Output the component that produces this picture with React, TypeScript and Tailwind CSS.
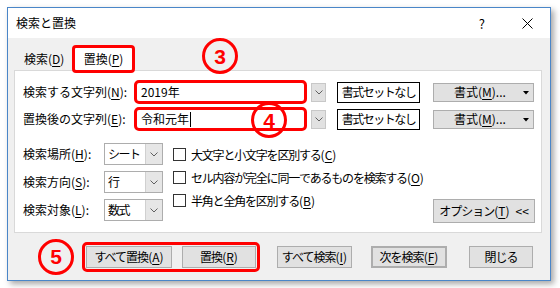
import React from 'react';

const font = { fontFamily: '"Noto Sans CJK JP", "Noto Sans", sans-serif' };

function U({ c }: { c: string }) {
  return <span className="underline underline-offset-[2px] decoration-1">{c}</span>;
}

function Chevron() {
  return (
    <svg width="8" height="5" viewBox="0 0 8 5" fill="none">
      <path d="M0.5 0.5 L4 4 L7.5 0.5" stroke="#606060" strokeWidth="1" />
    </svg>
  );
}

function Circle({ n, className }: { n: string; className: string }) {
  return (
    <div
      className={`w-[36px] h-[36px] rounded-full border-[3px] border-[#ff0000] bg-transparent flex items-center justify-center ${className}`}
    >
      <span className="text-[#ff0000] text-[21px] font-bold leading-none" style={{ fontFamily: '"Liberation Sans", Arial, sans-serif' }}>
        {n}
      </span>
    </div>
  );
}

function TextRow({ label, k, value, cursor }: { label: string; k: string; value: string; cursor?: boolean }) {
  return (
    <div className="flex items-center h-[24px]">
      <div className="w-[111px]">
        {label}(<U c={k} />):
      </div>
      <div className="w-[173px] h-[24px] border-[3px] border-[#ff0000] rounded-[5px] bg-white pl-[4px] flex items-center">
        <span>{value}</span>
        {cursor && <span className="inline-block w-px h-[15px] bg-black ml-px" />}
      </div>
      <div className="ml-[4px] w-[15px] h-[19px] bg-[#e1e1e1] border border-[#c8c8c8] flex items-center justify-center">
        <Chevron />
      </div>
      <div className="ml-[11px] w-[83px] h-[21px] border border-black bg-white flex items-center justify-center tracking-[-1.5px]">
        書式セットなし
      </div>
      <div className="ml-[13px] w-[101px] h-[19px] bg-[#e1e1e1] border border-[#adadad] flex items-center relative">
        <span className="ml-[20px]">
          書式(<U c="M" />)...
        </span>
        <svg className="absolute right-[4px] top-[7px]" width="6" height="4" viewBox="0 0 6 4">
          <path d="M0 0 L6 0 L3 3.5 Z" fill="#000" />
        </svg>
      </div>
    </div>
  );
}

function SelectRow({ label, k, value }: { label: string; k: string; value: string }) {
  return (
    <div className="flex items-center h-[22px]">
      <div className="w-[81px]">
        {label}(<U c={k} />):
      </div>
      <div className="w-[59px] h-[22px] border border-[#adadad] bg-white flex">
        <div className="flex-1 pl-[3px] flex items-center tracking-[-1.5px] whitespace-nowrap">{value}</div>
        <div className="w-[17px] bg-[#e6e6e6] border-l border-[#d0d0d0] flex items-center justify-center">
          <Chevron />
        </div>
      </div>
    </div>
  );
}

function Check({ label, k }: { label: string; k: string }) {
  return (
    <div className="flex items-center h-[23px] whitespace-nowrap">
      <div className="w-[13px] h-[13px] border border-[#333] bg-white" />
      <span className="ml-[5px]">
        <span className="tracking-[-1.2px]">{label}</span>(<U c={k} />)
      </span>
    </div>
  );
}

function Btn({ label, k, tail, className = '' }: { label: string; k?: string; tail?: string; className?: string }) {
  return (
    <div className={`h-[22px] bg-[#e1e1e1] border border-[#adadad] flex items-center justify-center whitespace-nowrap ${className}`}>
      <span className="tracking-[-1px]">{label}</span>
      {k && (
        <span>
          (<U c={k} />)
        </span>
      )}
      {tail && <span className="ml-[6px]">{tail}</span>}
    </div>
  );
}

export default function App() {
  return (
    <div className="w-[560px] h-[288px] bg-white relative overflow-hidden pt-[7px] pl-[7px] text-[12px] text-black leading-none" style={font}>
      <div className="w-[544px] h-[274px] border border-[#4a86c8] flex flex-col shadow-[3px_3px_6px_rgba(0,0,0,0.35)]">
        <div className="h-[30px] bg-white flex items-center pl-[8px] pr-[17px]">
          <span>検索と置換</span>
          <div className="ml-auto flex items-center gap-[37px]">
            <span className="text-[13px]">?</span>
            <svg width="11" height="11" viewBox="0 0 11 11">
              <path d="M0.5 0.5 L10.5 10.5 M10.5 0.5 L0.5 10.5" stroke="#000" strokeWidth="1" />
            </svg>
          </div>
        </div>
        <div className="flex-1 bg-[#f0f0f0] pl-[6px] pr-[8px] flex flex-col">
          <div className="pt-[7px] flex items-end">
            <div className="w-[58px] h-[22px] pl-[10px] flex items-center">
              検索(<U c="D" />)
            </div>
            <div className="w-[63px] h-[28px] mb-[-3px] relative z-10 bg-white border-[3px] border-[#ff0000] rounded-[4px] flex items-center justify-center">
              置換(<U c="P" />)
            </div>
          </div>
          <div className="h-[163px] border border-[#d9d9d9] bg-white pt-[9px] pl-[8px] pr-[6px] flex flex-col">
            <TextRow label="検索する文字列" k="N" value="2019年" />
            <div className="mt-[3px]">
              <TextRow label="置換後の文字列" k="E" value="令和元年" cursor />
            </div>
            <div className="mt-[12px] flex items-end">
              <div className="flex flex-col gap-[6px]">
                <SelectRow label="検索場所" k="H" value="シート" />
                <SelectRow label="検索方向" k="S" value="行" />
                <SelectRow label="検索対象" k="L" value="数式" />
              </div>
              <div className="ml-[10px] self-start flex flex-col">
                <Check label="大文字と小文字を区別する" k="C" />
                <Check label="セル内容が完全に同一であるものを検索する" k="O" />
                <Check label="半角と全角を区別する" k="B" />
              </div>
              <Btn label="オプション" k="T" tail="<<" className="ml-auto w-[102px] h-[24px] mb-[-2px]" />
            </div>
          </div>
          <div className="flex-1 flex items-center">
            <Circle n="5" className="ml-[24px]" />
            <div className="ml-[8px] border-[3px] border-[#ff0000] rounded-[5px] p-[1px] flex gap-[10px]">
              <Btn label="すべて置換" k="A" className="w-[86px]" />
              <Btn label="置換" k="R" className="w-[74px]" />
            </div>
            <Btn label="すべて検索" k="I" className="ml-[17px] w-[75px]" />
            <Btn label="次を検索" k="F" className="ml-[19px] w-[76px] border-2 border-[#0078d7]" />
            <Btn label="閉じる" className="ml-[22px] w-[64px]" />
          </div>
        </div>
      </div>
      <Circle n="3" className="absolute left-[202px] top-[38px]" />
      <Circle n="4" className="absolute left-[251px] top-[102px]" />
    </div>
  );
}
